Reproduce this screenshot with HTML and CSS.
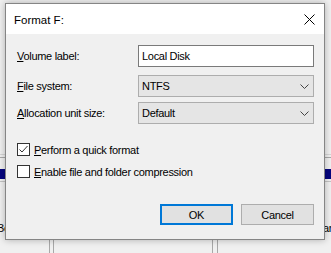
FILE: index.html
```
<!DOCTYPE html>
<html>
<head>
<meta charset="utf-8">
<link rel="stylesheet" href="styles.css">
</head>
<body>
<div class="desk">
  <div class="d-top"></div>
  <div class="d-line1"></div>
  <div class="d-line2"></div>
  <div class="d-band"></div>
  <div class="d-line3"></div>
  <div class="d-text"><span class="d-left">Bo</span><span class="d-right">ar</span></div>
  <div class="d-cols">
    <div class="d-col1"></div>
    <div class="d-col2"></div>
  </div>
</div>

<div class="dialog">
  <div class="titlebar">
    <span class="title">Format F:</span>
    <svg class="close" width="11" height="11" viewBox="0 0 11 11"><path d="M0.5 0.5 L10.5 10.5 M10.5 0.5 L0.5 10.5" stroke="#000" stroke-width="1" fill="none"/></svg>
  </div>
  <div class="content">
    <div class="field f1">
      <span class="label"><u>V</u>olume label:</span>
      <div class="input">Local Disk</div>
    </div>
    <div class="field f2">
      <span class="label"><u>F</u>ile system:</span>
      <div class="select"><span>NTFS</span><svg class="chev" width="9" height="5" viewBox="0 0 9 5"><path d="M0.5 0.5 L4.5 4.5 L8.5 0.5" stroke="#444" stroke-width="1" fill="none"/></svg></div>
    </div>
    <div class="field f3">
      <span class="label"><u>A</u>llocation unit size:</span>
      <div class="select"><span>Default</span><svg class="chev" width="9" height="5" viewBox="0 0 9 5"><path d="M0.5 0.5 L4.5 4.5 L8.5 0.5" stroke="#444" stroke-width="1" fill="none"/></svg></div>
    </div>
    <div class="check c1">
      <span class="box"><svg width="11" height="11" viewBox="0 0 11 11"><path d="M1.5 5.5 L4 8 L9.5 2" stroke="#333" stroke-width="1" fill="none"/></svg></span>
      <span class="ctext"><u>P</u>erform a quick format</span>
    </div>
    <div class="check c2">
      <span class="box"></span>
      <span class="ctext"><u>E</u>nable file and folder compression</span>
    </div>
    <div class="buttons">
      <div class="btn ok">OK</div>
      <div class="btn">Cancel</div>
    </div>
  </div>
</div>
</body>
</html>
```
FILE: styles.css
```
html, body {
  margin: 0;
  padding: 0;
}
body {
  width: 331px;
  height: 253px;
  overflow: hidden;
  background: #f0f0f0;
  font-family: "Liberation Sans", Arial, sans-serif;
  font-size: 11px;
  letter-spacing: -0.3px;
  color: #000;
  position: relative;
}
.desk {
  display: flex;
  flex-direction: column;
  width: 331px;
  height: 253px;
}
.d-top { height: 154px; }
.d-line1 { height: 1px; background: #d6d6d6; margin-bottom: 2px; }
.d-line2 { height: 1px; background: #a8a8a8; margin-bottom: 11px; }
.d-band { height: 10px; background: #05057e; margin-bottom: 2px; }
.d-line3 { height: 1px; background: #c4c4c4; margin-bottom: 39px; }
.d-text {
  height: 14px;
  line-height: 14px;
  display: flex;
  font-size: 11px;
  white-space: nowrap;
}
.d-left { margin-left: -3px; width: 326px; flex: none; }
.d-right { flex: none; }
.d-cols {
  flex: 1;
  display: flex;
}
.d-col1 {
  margin-left: 49px;
  width: 3px;
  border-left: 1px solid #a8a8a8;
  border-right: 1px solid #a8a8a8;
}
.d-col2 {
  margin-left: 158px;
  width: 4px;
  border-left: 1px solid #a8a8a8;
  border-right: 1px solid #a8a8a8;
}

.dialog {
  position: absolute;
  left: 5px;
  top: 3px;
  width: 318px;
  height: 235px;
  border: 1px solid #858585;
  background: #f0f0f0;
  box-shadow: 0 0 7px rgba(0, 0, 0, 0.28);
  display: flex;
  flex-direction: column;
}
.titlebar {
  height: 30px;
  flex: none;
  background: #fff;
  display: flex;
  align-items: center;
  justify-content: space-between;
  padding: 0 9px 0 8px;
}
.title {
  font-size: 11.5px;
  letter-spacing: 0;
  padding-top: 2px;
}
.close { display: block; }
.content {
  padding: 11px 10px 0 11px;
  display: flex;
  flex-direction: column;
}
.field {
  display: flex;
  align-items: center;
  height: 22px;
}
.f2 { margin-top: 8px; }
.f3 { margin-top: 5px; }
.label {
  width: 121px;
  flex: none;
}
.input, .select {
  width: 176px;
  height: 22px;
  box-sizing: border-box;
  display: flex;
  align-items: center;
}
.input {
  border: 1px solid #7a7a7a;
  background: #fff;
  padding-left: 3px;
}
.select {
  border: 1px solid #adadad;
  background: #e5e5e5;
  padding: 0 4px 0 3px;
  justify-content: space-between;
}
.chev { display: block; }
.check {
  display: flex;
  align-items: center;
  height: 13px;
}
.c1 { margin-top: 19px; }
.c2 { margin-top: 9px; }
.box {
  width: 13px;
  height: 13px;
  box-sizing: border-box;
  border: 1px solid #333;
  background: #fff;
  flex: none;
  margin-right: 4px;
}
.box svg { display: block; }
.buttons {
  margin-top: 26px;
  display: flex;
  justify-content: flex-end;
  gap: 8px;
}
.btn {
  width: 73px;
  height: 21px;
  box-sizing: border-box;
  border: 1px solid #adadad;
  background: #e1e1e1;
  display: flex;
  align-items: center;
  justify-content: center;
}
.ok {
  border: 2px solid #0078d7;
}
```
